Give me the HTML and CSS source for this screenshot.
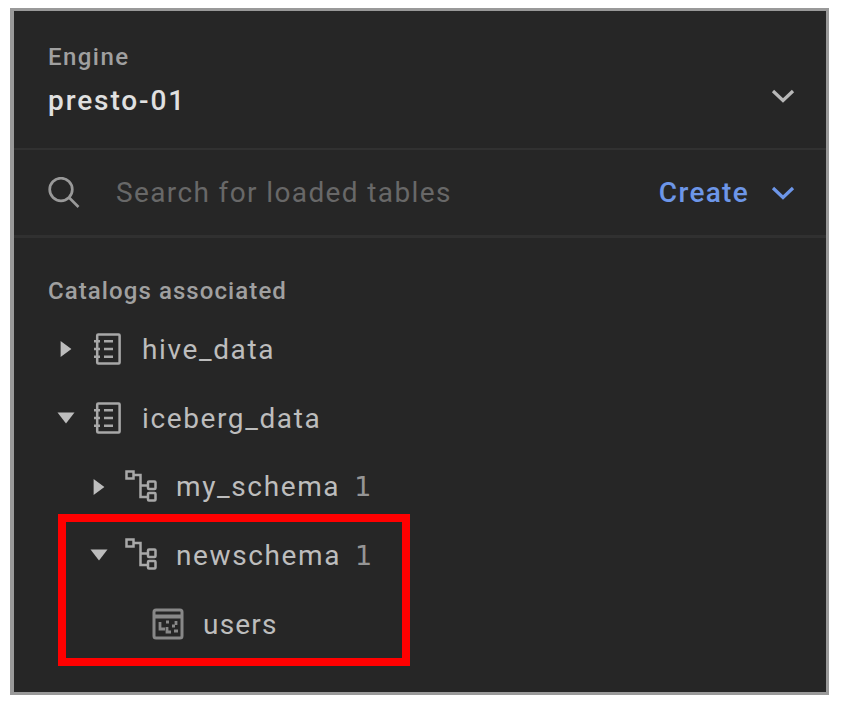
FILE: index.html
```html
<!DOCTYPE html>
<html lang="en">
<head>
<meta charset="utf-8">
<title>Data explorer</title>
<link rel="stylesheet" href="styles.css">
</head>
<body>
<svg class="defs" width="0" height="0" aria-hidden="true">
  <symbol id="chevron" viewBox="0 0 24 16"><path d="M2 3l10 9.500L22 3" fill="none" stroke="currentColor" stroke-width="3.2"/></symbol>
  <symbol id="right" viewBox="0 0 16 20"><path d="M2 1l12 9-12 9z" fill="currentColor"/></symbol>
  <symbol id="down" viewBox="0 0 20 16"><path d="M1.500 2.500h17l-8.500 11z" fill="currentColor"/></symbol>
  <symbol id="catalog" viewBox="0 0 28 32"><g fill="none" stroke="currentColor" stroke-width="2.5"><rect x="3.2" y="1.5" width="22.4" height="29" rx="1"/><path d="M10 8.2h9M10 16h9M10 23.8h9M0 8.2h6M0 16h6M0 23.8h6"/></g></symbol>
  <symbol id="schema" viewBox="0 0 34 34"><g fill="none" stroke="currentColor" stroke-width="2.500"><rect x="1.500" y="1.500" width="7" height="7"/><rect x="23" y="11.500" width="7.500" height="7.500" rx="1"/><rect x="23" y="23" width="7.500" height="7.500" rx="1"/><path d="M8.500 5h7v22H23M15.500 15.500H23"/></g></symbol>
  <symbol id="table" viewBox="0 0 32 32"><rect x="2" y="2" width="28" height="28" rx="2" fill="none" stroke="currentColor" stroke-width="3"/><path d="M3 8.500h26" stroke="currentColor" stroke-width="4"/><path d="M8 14v7h5M14 14h3M15 19v5h4M20 18h3M24 13v4M22 23h4" fill="none" stroke="currentColor" stroke-width="2.800"/></symbol>
</svg>
<main class="panel">
  <header class="engine">
    <div>
      <div class="caption engine-label">Engine</div>
      <div class="engine-name">presto-01</div>
    </div>
    <svg class="chevron"><use href="#chevron"/></svg>
  </header>
  <section class="toolbar">
    <svg class="search-icon" viewBox="0 0 32 32"><g fill="none" stroke="currentColor" stroke-width="2.700"><circle cx="13" cy="12.500" r="11.300"/><path d="M21 20.500l9.500 9.500"/></g></svg>
    <span class="placeholder">Search for loaded tables</span>
    <span class="create">Create</span>
    <svg class="chevron blue"><use href="#chevron"/></svg>
  </section>
  <section class="catalogs">
    <h2 class="caption heading">Catalogs associated</h2>
    <div class="row"><svg class="caret"><use href="#right"/></svg><svg class="catalog"><use href="#catalog"/></svg><span class="name">hive_data</span></div>
    <div class="row"><svg class="caret"><use href="#down"/></svg><svg class="catalog"><use href="#catalog"/></svg><span class="name">iceberg_data</span></div>
    <div class="row nested"><svg class="caret"><use href="#right"/></svg><svg class="schema"><use href="#schema"/></svg><span class="name">my_schema</span><span class="count">1</span></div>
    <div class="group">
      <div class="row nested"><svg class="caret"><use href="#down"/></svg><svg class="schema"><use href="#schema"/></svg><span class="name">newschema</span><span class="count">1</span></div>
      <div class="row leaf"><svg class="table"><use href="#table"/></svg><span class="name users">users</span></div>
      <div class="highlight"></div>
    </div>
  </section>
</main>
</body>
</html>
```
FILE: styles.css
```css
* { box-sizing: border-box; }
body { margin: 0; padding: 8px 0 0 10px; background: #fff; font-family: Roboto, "Liberation Sans", sans-serif; }
.defs { display: block; }
svg { flex: none; }
.panel { width: 819px; height: 687px; background: #262626; border: 3px solid #999; border-left-width: 4px; color: #bdbdbd; white-space: nowrap; }
.engine { height: 139px; display: flex; align-items: center; justify-content: space-between; padding: 5px 31px 0 34px; border-bottom: 2px solid #313131; }
.caption { font-size: 24px; line-height: 36px; color: #a0a0a0; letter-spacing: 1.450px; font-weight: 500; margin: 0; }
.engine-name { font-size: 28px; line-height: 51px; font-weight: 500; color: #e0e0e0; letter-spacing: 1.900px; }
.chevron { width: 24px; height: 16px; color: #b8b8b8; margin-top: 28px; }
.toolbar { height: 88px; display: flex; align-items: center; padding: 0 31px 0 34px; border-bottom: 3px solid #303030; font-size: 28px; }
.search-icon { width: 32px; height: 32px; color: #999; }
.placeholder { margin-left: 36px; color: #686868; letter-spacing: 1.380px; flex: 1; }
.create { color: #6d96e8; letter-spacing: 1.300px; margin-right: 22px; font-weight: 500; }
.chevron.blue { color: #6d96e8; margin-top: 0; }
.catalogs { padding-top: 35px; }
.heading { height: 42px; padding-left: 34px; letter-spacing: 1.080px; }
.row { height: 68.700px; display: flex; align-items: center; padding-left: 42px; font-size: 28px; }
.nested { padding-left: 75px; }
.leaf { padding-left: 138px; }
.caret { width: 20px; height: 18px; }
.catalog { width: 28px; height: 32px; margin: 0 20px 0 18px; color: #a8a8a8; }
.schema { width: 34px; height: 34px; margin: 0 17px 0 16px; color: #a8a8a8; }
.table { width: 32px; height: 32px; margin-right: 19px; color: #888; }
.name { letter-spacing: 1.620px; }
.users { letter-spacing: 1.200px; }
.count { font: 27px "DejaVu Sans", sans-serif; color: #959595; margin-left: 14px; }
.group { position: relative; }
.highlight { position: absolute; left: 44px; top: -7px; width: 352px; height: 152px; border: 8px solid #f00; }
```
